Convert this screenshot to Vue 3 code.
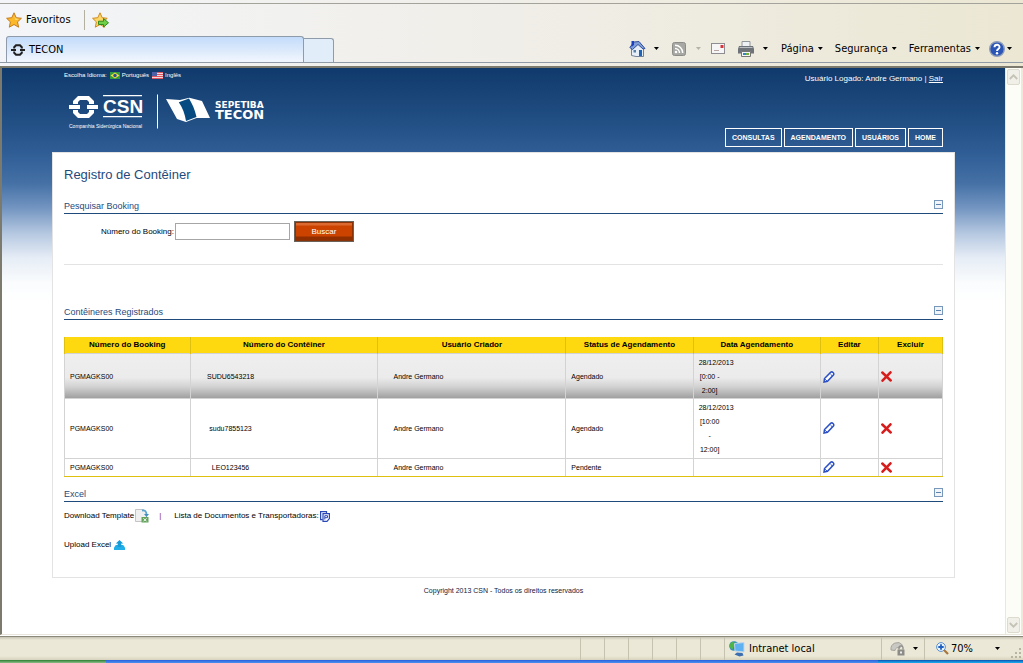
<script setup>
import { ref } from 'vue'

const booking = ref('')
const menu = ['Consultas', 'Agendamento', 'Usuários', 'Home']
const columns = [
  { label: 'Número do Booking', cls: 'c-booking' },
  { label: 'Número do Contêiner', cls: 'c-wide' },
  { label: 'Usuário Criador', cls: 'c-wide' },
  { label: 'Status de Agendamento', cls: 'c-status' },
  { label: 'Data Agendamento', cls: 'c-status' },
  { label: 'Editar', cls: 'c-edit' },
  { label: 'Excluir', cls: 'c-delete' }
]
const rows = [
  { booking: 'PGMAGKS00', container: 'SUDU6543218', user: 'Andre Germano', status: 'Agendado', date: '28/12/2013 [0:00 - 2:00]' },
  { booking: 'PGMAGKS00', container: 'sudu7855123', user: 'Andre Germano', status: 'Agendado', date: '28/12/2013 [10:00 - 12:00]' },
  { booking: 'PGMAGKS00', container: 'LEO123456', user: 'Andre Germano', status: 'Pendente', date: '' }
]
</script>

<template>
  <div class="browser">
    <div class="favbar">
      <button class="plain fav" type="button">
        <svg width="16" height="16" viewBox="0 0 16 16"><path d="M8 .8l2.200 4.900 5.200.6-3.900 3.600 1.100 5.300L8 12.500l-4.700 2.700 1.100-5.300L.6 6.300l5.200-.6z" fill="#fbb829" stroke="#c67c1c" /><path d="M8 3l1.500 3.600 3.700.4-3.700 1z" fill="#ffe592" /></svg>
        <span>Favoritos</span>
      </button>
      <span class="favsep"></span>
      <button class="plain" type="button" aria-label="Adicionar a favoritos">
        <svg width="17" height="16" viewBox="0 0 17 16"><path d="M8 .8l2.200 4.900 5 .6-3.700 3.600 1.100 5.300L8 12.500l-4.700 2.700 1.100-5.300L.6 6.300l5.200-.6z" fill="#fbd768" stroke="#d08a1c" /><path d="M6.500 9.200h5V6.500l5 4.300-5 4.300v-2.600h-5z" fill="#6fd048" stroke="#2f8a22" /></svg>
      </button>
    </div>

    <div class="tabs">
      <button class="tab" type="button">
        <svg width="14" height="12" viewBox="0 0 14 12"><path d="M0 6h5M9 6h5" stroke="#222" stroke-width="2" /><path d="M3.200 4.500V3.200L5 1.300h4l1.800 1.900v1.300M3.200 7.500v1.300L5 10.700h4l1.800-1.900V7.500" fill="none" stroke="#222" stroke-width="2" /></svg>
        <span>TECON</span>
      </button>
      <button class="newtab" type="button" aria-label="Nova guia"></button>
      <div class="commands">
        <button class="plain home" type="button" aria-label="Página inicial">
          <svg width="17" height="17" viewBox="0 0 17 17"><path d="M2.500 8v7.500l4.500 1h7.500V8.500L9.500 3z" fill="#e8eef8" stroke="#71809b" /><path d="M.8 7.500L5 2l5-.5 6 7-2 .5-5-4.500-5.500 5z" fill="#7f9ed8" stroke="#324f9b" /><path d="M2.500 1h2.500v4L2.500 7z" fill="#1c3fc0" /><path d="M10 10h3v6h-3z" fill="#1d63b8" /><path d="M4.500 10h2.500v2.500h-2.500z" fill="#5580a8" /></svg>
          <i class="arrow"></i>
        </button>
        <button class="plain rss" type="button" aria-label="Feeds">
          <svg width="14" height="14" viewBox="0 0 14 14"><rect x=".5" y=".5" width="13" height="13" rx="2" fill="#a7a7a3" stroke="#8c8c88" /><circle cx="4" cy="10" r="1.300" fill="#fff" /><path d="M3 6.500a4.500 4.500 0 0 1 4.500 4.500M3 3.300A7.700 7.700 0 0 1 10.700 11" fill="none" stroke="#fff" stroke-width="1.500" /></svg>
          <i class="arrow off"></i>
        </button>
        <button class="plain mail" type="button" aria-label="Ler email">
          <svg width="14" height="11" viewBox="0 0 14 11"><rect x=".5" y=".5" width="13" height="10" fill="#f6f6f6" stroke="#8e8e92" /><path d="M9.500 2h3v3h-3z" fill="#d8343a" /><path d="M3 7.500h5" stroke="#b9a4a4" /></svg>
        </button>
        <button class="plain print" type="button" aria-label="Imprimir">
          <svg width="16" height="16" viewBox="0 0 16 16"><path d="M4 .5h8V7H4z" fill="#eef1f4" stroke="#8f969c" /><path d="M1 5h14l1 3v4.500H0V8z" fill="#6d7378" /><path d="M1.500 6.500h13" stroke="#b9bec2" /><path d="M3.500 10.500h9v5h-9z" fill="#f5f5f5" stroke="#777" /><path d="M5 13h3" stroke="#2f86c9" stroke-width="2" /><path d="M8 13h3" stroke="#74ae3e" stroke-width="2" /></svg>
          <i class="arrow"></i>
        </button>
        <button class="plain word" type="button">Página<i class="arrow"></i></button>
        <button class="plain word" type="button">Segurança<i class="arrow"></i></button>
        <button class="plain word" type="button">Ferramentas<i class="arrow"></i></button>
        <button class="plain help" type="button" aria-label="Ajuda">
          <svg width="16" height="16" viewBox="0 0 16 16"><circle cx="8" cy="8" r="7.300" fill="#2b56b5" stroke="#8d9cb8" stroke-width="1.400" /><path d="M5.500 6.300C5.500 2.900 10.700 3 10.500 6.200 10.400 8 8 7.900 8 10" fill="none" stroke="#fff" stroke-width="1.900" /><circle cx="8" cy="12.200" r="1.200" fill="#fff" /></svg>
          <i class="arrow"></i>
        </button>
      </div>
    </div>

    <div class="viewport">
      <div class="page">
        <header class="top">
          <div class="brand">
            <div class="langs">
              <span>Escolha Idioma:</span>
              <a href="#pt"><svg width="10" height="7" viewBox="0 0 10 7"><path d="M0 0h10v7H0z" fill="#2f9a3f" /><path d="M5 .5L9.500 3.500 5 6.500.5 3.500z" fill="#f3dc3a" /><circle cx="5" cy="3.500" r="1.700" fill="#27509c" /></svg>Português</a>
              <a href="#en"><svg width="11" height="7" viewBox="0 0 11 7"><path d="M0 0h11v7H0z" fill="#f3d5d8" /><path d="M0 .5h11M0 2.500h11M0 4.500h11M0 6.500h11" stroke="#d95560" /><path d="M0 0h5v4H0z" fill="#4a5fa5" /></svg>Inglês</a>
            </div>
            <svg class="logo" width="204" height="38" viewBox="0 0 204 38" role="img" aria-label="CSN Sepetiba Tecon">
              <g fill="#fff">
                <path d="M5 12h11v4H5zM23 12h11v4H23z" />
                <path d="M14 3h11l5 5v3h-5V9l-2-2h-7l-2 2v2H9V8zM9 17h5v2l2 2h7l2-2v-2h5v3l-5 5H14l-5-5z" />
                <path d="M39 2h39v1.200H39zM39 23h39v1.200H39z" />
                <path d="M93 1.500h1v34h-1z" />
                <text x="39" y="20" class="csn">CSN</text>
                <text x="5" y="35" class="csnsub">Companhia Siderúrgica Nacional</text>
                <path d="M102 6l14 1 9.300-2.300L138 8l8 17h-13.500L122 29l-9-3z" />
                <text x="151" y="15" class="sep1">S<tspan class="sep2">EPETIBA</tspan><tspan x="151" y="26" class="tecon">TECON</tspan></text>
              </g>
              <path d="M114.800 9.300L125 5.500c3 5 6 11 7.500 18.500L122 28c-1-7-3.500-13-7.200-18.700z" fill="#064a82" />
            </svg>
          </div>
          <div class="side">
            <div class="user">Usuário Logado: Andre Germano | <a href="#sair">Sair</a></div>
            <nav class="menu">
              <a v-for="m in menu" :key="m" :href="'#' + m">{{ m }}</a>
            </nav>
          </div>
        </header>

        <main class="card">
          <h1>Registro de Contêiner</h1>

          <section>
            <div class="sechead"><h2>Pesquisar Booking</h2><button class="fold" type="button" aria-label="Recolher"></button></div>
            <form class="search" @submit.prevent>
              <label for="booking">Número do Booking:</label>
              <input id="booking" v-model="booking" type="text">
              <button class="go" type="submit">Buscar</button>
            </form>
          </section>

          <section>
            <div class="sechead"><h2>Contêineres Registrados</h2><button class="fold" type="button" aria-label="Recolher"></button></div>
            <table>
              <colgroup><col v-for="c in columns" :key="c.label" :class="c.cls"></colgroup>
              <thead><tr><th v-for="c in columns" :key="c.label">{{ c.label }}</th></tr></thead>
              <tbody>
                <tr v-for="r in rows" :key="r.container">
                  <td><span class="narrow">{{ r.booking }}</span></td>
                  <td><span class="box">{{ r.container }}</span></td>
                  <td><span class="box">{{ r.user }}</span></td>
                  <td>{{ r.status }}</td>
                  <td><span class="when">{{ r.date }}</span></td>
                  <td class="act"><button class="plain" type="button" aria-label="Editar">
                    <svg width="12" height="12" viewBox="0 0 12 12"><path d="M1 11l.5-3.500L7.800 1.200c1.500-1 3.600.8 2.800 2.600L4.500 10.300z" fill="#fff" stroke="#2b50c4" stroke-width="1.500" /><path d="M1.500 7.800l2.800 2.500M7.500 3.200l1.500 1.400" stroke="#2b50c4" /></svg>
                  </button></td>
                  <td class="act"><button class="plain" type="button" aria-label="Excluir">
                    <svg width="11" height="11" viewBox="0 0 11 11"><path d="M1.300 1.500l8.400 8M9.500 1.300l-8 8.400" stroke="#d81c1c" stroke-width="2.500" stroke-linecap="round" /></svg>
                  </button></td>
                </tr>
              </tbody>
            </table>
          </section>

          <section>
            <div class="sechead excel"><h2>Excel</h2><button class="fold" type="button" aria-label="Recolher"></button></div>
            <div class="links">
              <a href="#template">Download Template
                <svg width="14" height="14" viewBox="0 0 14 14"><path d="M.5.500h8l3 3v9H.5z" fill="#f0f0f0" stroke="#c4c4c4" /><path d="M7 1.500c3-.5 4.500 1 4.500 4" fill="none" stroke="#5ba4d0" stroke-width="1.800" /><path d="M9 5h5l-2.500 3z" fill="#3f8fc4" /><path d="M6.500 8h7v5.500h-7z" fill="#63a35c" /><path d="M8.500 9.300l3 3M11.500 9.300l-3 3" stroke="#fff" /></svg>
              </a>
              <span class="bar">|</span>
              <a href="#lista">Lista de Documentos e Transportadoras:
                <svg width="10" height="11" viewBox="0 0 10 11"><path d="M6.500 2V.6H.6v8h2" fill="none" stroke="#2b48b8" stroke-width="1.200" /><path d="M3 2.600h6.400v5L7 10.400H3z" fill="#fff" stroke="#2b48b8" stroke-width="1.200" /><path d="M4.800 8.500V4.700h2.700v2H5" fill="none" stroke="#2b48b8" /></svg>
              </a>
            </div>
            <div class="links upload">
              <a href="#upload">Upload Excel
                <svg width="11" height="11" viewBox="0 0 11 11"><path d="M1.800 5h7.400L11 7.500V10H0V7.500z" fill="#20aee8" /><path d="M5.500 0l3.700 3.500H7.300V7H3.700V3.500H1.800z" fill="#159bd8" /></svg>
              </a>
            </div>
          </section>
        </main>
        <footer>Copyright 2013 CSN - Todos os direitos reservados</footer>
      </div>
      <div class="scroll">
        <button type="button" aria-label="Rolar para cima"><svg width="9" height="6" viewBox="0 0 9 6"><path d="M.8 5l3.700-3.700L8.200 5" fill="none" stroke="#c4c3b6" stroke-width="1.800" /></svg></button>
        <button type="button" aria-label="Rolar para baixo"><svg width="9" height="6" viewBox="0 0 9 6"><path d="M.8 1l3.700 3.700L8.200 1" fill="none" stroke="#c4c3b6" stroke-width="1.800" /></svg></button>
      </div>
    </div>

    <div class="status">
      <span v-for="n in 6" :key="n" class="cell"></span>
      <span class="zone">
        <svg width="16" height="16" viewBox="0 0 16 16"><circle cx="5" cy="5" r="4.800" fill="#2f8fb8" /><path d="M1 3c2-3 5-2 5 0s-2 2-2 5C2 8 0 6 1 3z" fill="#4fb548" /><path d="M5.500 2.500L15 1.500v9.500l-9-1z" fill="#5fb2f2" stroke="#c3d6ea" /><path d="M8 11.500l5.500.5 1 2.500-4 1-5-2z" fill="#3d6fb0" /></svg>
        Intranet local
      </span>
      <button class="plain lock" type="button" aria-label="Modo protegido">
        <svg width="16" height="15" viewBox="0 0 16 15"><path d="M1 9A6.500 6.500 0 0 1 12.500 4l-3 3A3 3 0 0 0 5 9.500z" fill="#c9c8c2" stroke="#a5a49e" /><path d="M7.500 8.500h7v6h-7z" fill="#8b8b88" /><path d="M9 8.500V6.800a2 2 0 0 1 4 0v1.700" fill="none" stroke="#8b8b88" stroke-width="1.300" /><path d="M10 10.500h2v2h-2z" fill="#eee" /></svg>
        <i class="arrow"></i>
      </button>
      <button class="plain zoom" type="button">
        <svg width="13" height="13" viewBox="0 0 13 13"><path d="M8 8l4 4" stroke="#a8763a" stroke-width="2.200" /><circle cx="5" cy="5" r="4.400" fill="#eaf4fd" stroke="#5d8fcb" /><path d="M5 2.300v5.400M2.300 5h5.400" stroke="#2060c0" stroke-width="1.800" /></svg>
        <span>70%</span><i class="arrow"></i>
      </button>
      <svg class="grip" width="11" height="11" viewBox="0 0 11 11"><path d="M8 0h2v2H8zM4 4h2v2H4zM8 4h2v2H8zM0 8h2v2H0zM4 8h2v2H4zM8 8h2v2H8z" fill="#b8b4a2" /></svg>
    </div>
    <div class="taskbar"><span class="start"></span><span class="tasks"></span><span class="tray"></span></div>
  </div>
</template>

<style>
body { margin: 0; }
</style>

<style scoped>
* { box-sizing: border-box; }
.browser {
  display: flex;
  flex-direction: column;
  min-height: 100vh;
  font: 11px/14px "DejaVu Sans Condensed", "DejaVu Sans", sans-serif;
  color: #000;
  background: linear-gradient(90deg, #f3f5f8 0, #f0eee8 50%, #ebe7d3 100%) top / 100% 67px no-repeat #fff;
}
svg { display: block; flex: none; }
button { font: inherit; color: inherit; margin: 0; border-radius: 0; }
a { color: inherit; text-decoration: none; }
.plain { display: flex; align-items: center; border: 0; padding: 0; background: none; }
.arrow { display: block; width: 5px; height: 3px; background: #000; clip-path: polygon(0 0, 100% 0, 50% 100%); }
.arrow.off { background: #b5b3a8; }

.favbar { display: flex; align-items: center; height: 33px; margin-top: 3px; padding-left: 6px; border-top: 1px solid #a3a39b; }
.fav { gap: 4px; }
.favsep { width: 1px; height: 20px; margin: 0 7px 0 13px; background: #b3b09f; }

.tabs { display: flex; align-items: flex-end; height: 27px; padding-left: 6px; border-bottom: 1px solid #8f9aa6; }
.tab { display: flex; align-items: center; gap: 4px; width: 29.3%; height: 26px; padding: 0 4px; border: 1px solid #8f9bab; border-bottom: 0; border-radius: 3px 3px 0 0; background: linear-gradient(#c3dcfb, #dfebfb 60%, #f2f7fe); }
.newtab { width: 30px; height: 24px; border: 1px solid #8f9bab; border-left: 0; border-bottom: 0; border-radius: 0 3px 0 0; padding: 0; background: #e2edfa; }
.commands { display: flex; align-items: center; flex: 1; justify-content: flex-end; height: 27px; padding-right: 11px; }
.home { gap: 8px; margin-right: 13px; }
.rss { gap: 10px; margin-right: 10px; }
.mail { margin-right: 13px; }
.print { gap: 9px; margin-right: 13px; }
.word { gap: 4px; margin-right: 12px; }
.word + .help { margin-left: -3px; }
.help { gap: 2px; }

.viewport { display: flex; flex: 1; margin-top: 3px; border: solid #7c7a6c; border-width: 2px 0 1px 2px; border-bottom-color: #e8e6da; background: #fff; }
.page {
  flex: 1;
  padding: 0 50px;
  font: 8px/10px "Liberation Sans", Arial, sans-serif;
  background: linear-gradient(#103a6c 0, #204d82 50px, #2f5d95 85px, #4470a5 115px, #7395c1 140px, #b4c7e0 165px, #e6edf6 190px, #fafcfd 215px, #fff 235px);
}
.top { display: flex; justify-content: space-between; height: 84px; padding: 0 12px; color: #fff; }
.langs { display: flex; align-items: center; gap: 3px; height: 14px; font-size: 6px; }
.langs a { display: flex; align-items: center; gap: 2px; }
.logo { margin-top: 11px; }
.csn { font: bold 19px "Liberation Sans", sans-serif; }
.csnsub { font: 5px "Liberation Sans", sans-serif; }
.sep1 { font: bold 9px "DejaVu Sans", sans-serif; }
.sep2 { font-size: 9px; }
.tecon { font-size: 13px; }
.side { display: flex; flex-direction: column; align-items: flex-end; justify-content: space-between; padding: 6px 0 5px; }
.user a { text-decoration: underline; }
.menu { display: flex; gap: 2px; }
.menu a { padding: 3px 6px; border: 1px solid #fff; font-weight: bold; font-size: 7px; text-transform: uppercase; line-height: 11px; }

.card { padding: 12px 11px 17px; border: 1px solid #e3e3e3; background: #fff; }
h1 { margin: 0; font-size: 13px; line-height: 20px; font-weight: normal; color: #1f4a7c; }
h2 { margin: 0; font-size: 9px; line-height: 12px; font-weight: normal; color: #1f4a7c; }
.sechead { display: flex; justify-content: space-between; align-items: flex-end; height: 29px; padding-bottom: 1px; border-bottom: 1px solid #1f4a7c; }
.fold { width: 9px; height: 9px; margin: 0 0 3px; padding: 0; border: 1px solid #7798bb; background: linear-gradient(#5d82ac, #5d82ac) center / 5px 1px no-repeat #f1f5fa; }
.search { display: flex; align-items: flex-start; height: 51px; margin-bottom: 26px; padding: 7px 0 0 37px; border-bottom: 1px solid #e3e3e3; }
.search label { line-height: 21px; }
.search input { width: 115px; height: 17px; margin: 2px 4px 0 1px; padding: 0 2px; border: 1px solid #a6a6a6; font: inherit; }
.go { width: 60px; height: 21px; padding: 0; border: 1px solid #6b6259; outline: 1px solid #8a3208; outline-offset: -2px; color: #fff; background: linear-gradient(#dc6a30 0, #dc6a30 3px, #cc4300 4px, #cc4300 14px, #8f2f00 15px); }

table { width: 100%; margin-top: 17px; table-layout: fixed; border-collapse: collapse; font-size: 7px; }
.c-booking { width: 14.3%; }
.c-wide { width: 21.4%; }
.c-status { width: 14.5%; }
.c-edit { width: 6.600%; }
th { height: 16px; padding: 0; font-size: 8px; background: #ffd90f; border: 1px solid #dfc011; border-width: 0 1px; }
td { height: 18px; padding: 2px 5px 1px; border: 1px solid #d3d3d3; line-height: 14px; }
tbody tr:first-child { background: linear-gradient(#efefef 0, #ebebeb 55%, #d2d2d2 75%, #a0a0a0 100%); }
tbody tr:first-child td { padding-bottom: 0; }
tbody tr:last-child td { border-bottom-color: #dfc011; }
.box { display: block; width: 82px; margin: 0 -6px; text-align: center; }
.narrow, .when { display: block; width: 22px; text-align: center; }
td.act { padding-left: 2px; padding-bottom: 2px; }

.excel { height: 25px; }
.links { display: flex; align-items: center; height: 29px; }
.links a { display: flex; align-items: center; gap: 1px; }
.bar { margin: 0 13px 0 10px; color: #8c2a5a; }
.upload a { gap: 3px; }
footer { padding: 8px 0; text-align: center; font-size: 7px; color: #102040; }

.scroll { display: flex; flex-direction: column; justify-content: space-between; width: 18px; border-left: 1px solid #e9e8dc; border-right: 2px solid #ece9d8; background: #fdfdf8; }
.scroll button { display: flex; align-items: center; justify-content: center; height: 16px; margin: 1px; padding: 0; border: 1px solid #dddbce; border-radius: 2px; background: #f1f0e8; }

.status { display: flex; align-items: stretch; justify-content: flex-end; height: 24px; margin-top: 1px; border-top: 1px solid #8b897b; background: linear-gradient(#c6c3b3 0, #ebe8d7 3px, #ebe8d7 19px, #d6d2bd 23px); }
.cell { width: 24px; border-left: 1px solid #c5c2b0; }
.zone { display: flex; align-items: center; gap: 4px; width: 157px; padding-left: 4px; border-left: 1px solid #c5c2b0; }
.lock { width: 43px; gap: 7px; padding-left: 8px; border-left: 1px solid #c5c2b0; }
.zoom { width: 86px; gap: 2px; padding: 0 10px 0 11px; border-left: 1px solid #c5c2b0; }
.zoom .arrow { margin-left: auto; }
.grip { align-self: flex-end; margin: 0 1px 1px; }
.taskbar { display: flex; height: 3px; }
.start { width: 10.400%; background: linear-gradient(#2c7d33, #8cbf88); }
.tasks { flex: 1; background: linear-gradient(#2a5fdc, #4a92f0); }
.tray { width: 14.200%; background: linear-gradient(#0f4fb0, #19b3f2); }
</style>
